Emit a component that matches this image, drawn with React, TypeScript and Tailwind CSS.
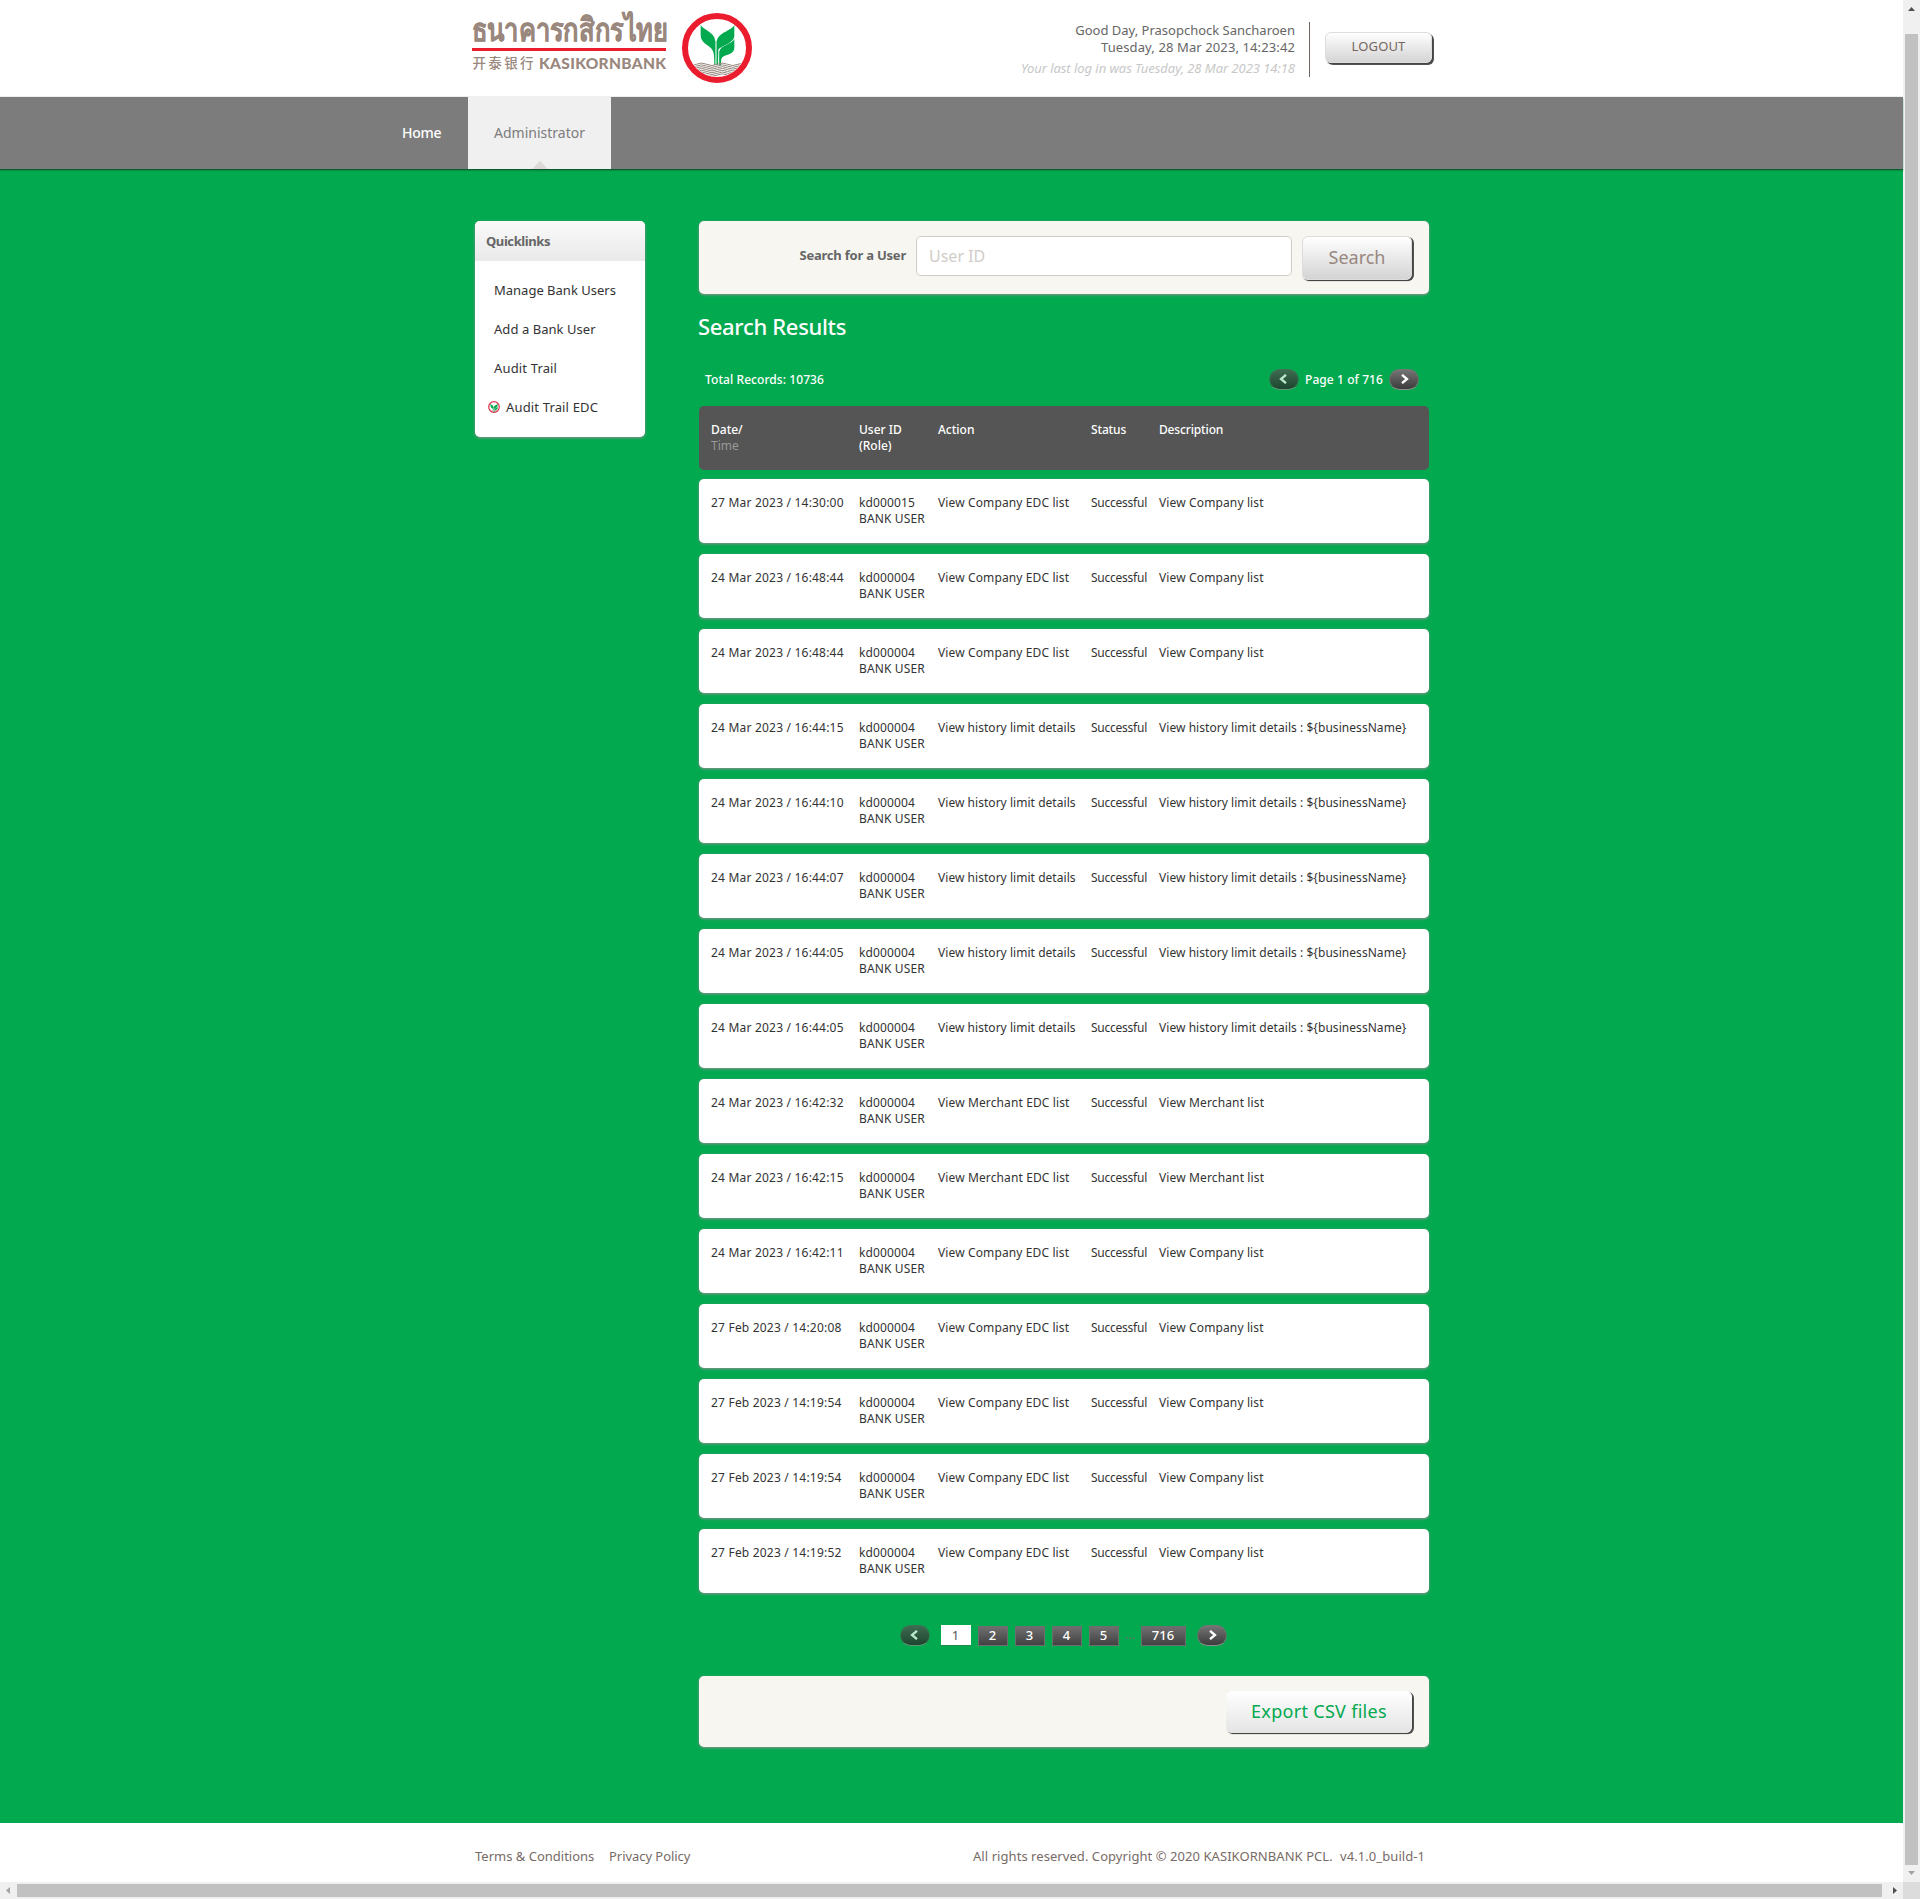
import type { ReactNode } from "react";

type Entry = { time: string; user: string; action: string; description: string };

const company = { action: "View Company EDC list", description: "View Company list" };
const merchant = { action: "View Merchant EDC list", description: "View Merchant list" };
const history = {
  action: "View history limit details",
  description: "View history limit details : ${businessName}",
};

const entries: Entry[] = [
  { time: "27 Mar 2023 / 14:30:00", user: "kd000015", ...company },
  { time: "24 Mar 2023 / 16:48:44", user: "kd000004", ...company },
  { time: "24 Mar 2023 / 16:48:44", user: "kd000004", ...company },
  { time: "24 Mar 2023 / 16:44:15", user: "kd000004", ...history },
  { time: "24 Mar 2023 / 16:44:10", user: "kd000004", ...history },
  { time: "24 Mar 2023 / 16:44:07", user: "kd000004", ...history },
  { time: "24 Mar 2023 / 16:44:05", user: "kd000004", ...history },
  { time: "24 Mar 2023 / 16:44:05", user: "kd000004", ...history },
  { time: "24 Mar 2023 / 16:42:32", user: "kd000004", ...merchant },
  { time: "24 Mar 2023 / 16:42:15", user: "kd000004", ...merchant },
  { time: "24 Mar 2023 / 16:42:11", user: "kd000004", ...company },
  { time: "27 Feb 2023 / 14:20:08", user: "kd000004", ...company },
  { time: "27 Feb 2023 / 14:19:54", user: "kd000004", ...company },
  { time: "27 Feb 2023 / 14:19:54", user: "kd000004", ...company },
  { time: "27 Feb 2023 / 14:19:52", user: "kd000004", ...company },
];

function Leaves() {
  return (
    <g fill="#02a94f">
      <path d="M77 51C84 66 119 72 120.500 98L120.500 171L118 171C118 138 117 127 104 117C90 106 77 100 77 82Z" />
      <path d="M178 51C171 68 128 74 126 99L126 171L129 171L130 126C132 116 178 106 178 84Z" />
      <path d="M178 93C172 108 135 112 132.500 132L132.500 171L138 171C138 154 138 148 148 144C162 139 178 134 178 120Z" />
      <path d="M122 98H124.500V171H122Z" />
    </g>
  );
}

function Logo() {
  return (
    <svg width="290" height="84" viewBox="0 0 290 84" className="block">
      <g fill="#9a877d">
        <text x="-0.500" y="41.300" fontSize="32.500" fontWeight="700" textLength="196" lengthAdjust="spacingAndGlyphs" stroke="#9a877d" strokeWidth="0.300" className="font-['Noto_Sans',sans-serif]">
          ธนาคารกสิกรไทย
        </text>
        <text x="0.500" y="68" fontSize="13.500" fontWeight="500" textLength="61" className="font-['Noto_Sans_CJK_SC',sans-serif]">
          开泰银行
        </text>
        <text x="67" y="68.500" fontSize="15.500" fontWeight="900" textLength="127" className="font-['Lato',sans-serif]">
          KASIKORNBANK
        </text>
      </g>
      <rect x="0" y="48" width="194" height="3" fill="#eb1c2d" />
      <clipPath id="emblem">
        <circle cx="245" cy="48" r="28.500" />
      </clipPath>
      <g transform="translate(203 8) scale(0.333333)">
        <Leaves />
      </g>
      <g clipPath="url(#emblem)" fill="none" stroke="#95857d" strokeWidth="1">
        {[62.8, 64.6, 66.4, 68.2, 70, 71.8, 73.6].map((y) => (
          <path key={y} d={`M214 ${y}q5.200 4 10.400 1.500t10.400 0t10.400 0t10.400 0t10.400 0t10.400 0`} />
        ))}
      </g>
      <circle cx="245" cy="48" r="32" fill="none" stroke="#eb1c2d" strokeWidth="6" />
    </svg>
  );
}

function MiniEmblem() {
  return (
    <svg width="12" height="12" viewBox="0 0 12 12" className="mr-[6px] -mt-px shrink-0">
      <circle cx="6" cy="6" r="5.300" fill="#fff" stroke="#e0324a" strokeWidth="1.200" />
      <g transform="translate(-2.900 -0.800) scale(0.07)">
        <Leaves />
      </g>
      <path d="M3.500 9.300H8.500" stroke="#b9aea9" strokeWidth="0.800" />
    </svg>
  );
}

function Pill({ dir, muted }: { dir: "prev" | "next"; muted?: boolean }) {
  return (
    <span
      className={
        muted
          ? "flex h-[21px] w-[30px] items-center justify-center rounded-full border border-b-[#5c9a76] border-x-[#2f7a4e] border-t-[#3d7355] bg-linear-to-b from-[#3d6b50] to-[#1f4630]"
          : "flex h-[21px] w-[30px] items-center justify-center rounded-full border border-b-[#8d8d8d] border-x-[#66756c] border-t-[#777] bg-linear-to-b from-[#757575] to-[#3c3c3c]"
      }
    >
      <svg
        width="8"
        height="10"
        viewBox="0 0 8 10"
        fill="none"
        stroke={muted ? "#b9e8cb" : "#fff"}
        strokeWidth="2.300"
        className={dir === "prev" ? "-mt-px mr-[2px]" : "-mt-px ml-[2px]"}
      >
        <path d={dir === "prev" ? "M7 0.800L2 5L7 9.200" : "M1 0.800L6 5L1 9.200"} />
      </svg>
    </span>
  );
}

function PageBox({ children, className = "w-[30px]" }: { children: ReactNode; className?: string }) {
  return (
    <span
      className={`${className} mt-px flex h-[20px] justify-center border border-[#6d6d6d] bg-linear-to-b from-[#6f6f6f] to-[#424242] pr-px text-[13px] leading-[17px] font-medium text-white`}
    >
      {children}
    </span>
  );
}

const grid = "grid grid-cols-[148px_79px_153px_68px_1fr] pt-[16px] pl-[12px] h-[64px] rounded-[5px] text-[12px] leading-[16px]";
const card = "rounded-[5px] shadow-[0_1px_3px_#8f8f8f]";

export default function App() {
  return (
    <div className="flex h-[1899px] w-[1920px] flex-col overflow-hidden bg-white font-['Noto_Sans',sans-serif]">
      <div className="flex h-[1882px]">
        <div className="flex w-[1903px] flex-col">
          <header className="flex h-[97px] border-b border-[#eee] pl-[472px]">
            <Logo />
            <div className="mt-[22px] flex h-[55px] w-[548px] flex-col items-end border-r border-[#6f6460] pr-[14px] text-[13px] leading-[17px] text-[#666]">
              <p>Good Day, Prasopchock Sancharoen</p>
              <p className="tracking-[0.11px]">Tuesday, 28 Mar 2023, 14:23:42</p>
              <p className="mt-[4px] tracking-[-0.05px] text-[#c8c8c8] italic">Your last log in was Tuesday, 28 Mar 2023 14:18</p>
            </div>
            <button className="mt-[32px] ml-[15px] h-[31px] w-[107px] rounded-[6px] border border-[#ddd] bg-linear-to-b from-white to-[#d4d4d4] pb-[2px] text-[13px] leading-[17px] tracking-[0.15px] text-[#756661] shadow-[1px_1px_1px_#444,2px_2px_0_#555]">
              LOGOUT
            </button>
          </header>

          <nav className="relative z-10 flex h-[72px] bg-[#7c7c7c] pl-[377px] text-[14px] leading-[72px] shadow-[0_1px_0_#0d5c31,0_2px_1px_#06903f]">
            <a className="w-[91px] pl-[25px] font-medium tracking-[-0.3px] text-white">Home</a>
            <a className="relative w-[143px] bg-[#f0f0f0] text-center text-[#7c7c7c]">
              Administrator
              <svg width="16" height="8" viewBox="0 0 16 8" className="absolute bottom-0 left-[64px]">
                <path d="M0 8L8 0L16 8Z" fill="#ded9d9" />
              </svg>
            </a>
          </nav>

          <main className="flex h-[1654px] items-start bg-[#02a94f] pt-[52px] pl-[475px]">
            <aside className={`${card} w-[170px] shrink-0 overflow-hidden bg-white text-[13px]`}>
              <h2 className="h-[40px] bg-linear-to-b from-[#fafafa] to-[#e9e9e9] pl-[11px] leading-[40px] font-bold tracking-[-0.42px] text-[#666]">
                Quicklinks
              </h2>
              <ul className="py-[10px] pl-[19px] leading-[39px] text-[#333]">
                <li>Manage Bank Users</li>
                <li className="tracking-[0.05px]">Add a Bank User</li>
                <li className="tracking-[0.15px]">Audit Trail</li>
                <li className="-ml-[6px] flex items-center tracking-[0.15px]">
                  <MiniEmblem />
                  Audit Trail EDC
                </li>
              </ul>
            </aside>

            <section className="ml-[54px] w-[730px]">
              <div className={`${card} flex h-[73px] items-start justify-end bg-[#f7f6f1] pt-[15px] pr-[17px]`}>
                <label className="mr-[10px] text-[13px] leading-[38px] font-bold tracking-[-0.22px] text-[#666]">Search for a User</label>
                <div className="h-[40px] w-[376px] rounded-[5px] border border-[#ccc] bg-white pl-[12px] text-[16px] leading-[39px] text-[#d0cdc8]">
                  User ID
                </div>
                <button className="ml-[10px] h-[44px] w-[110px] rounded-[6px] border border-[#ddd] bg-linear-to-b from-white to-[#d4d4d4] pb-[3px] text-[18px] leading-[24px] text-[#98877f] shadow-[1px_1px_1px_#444,2px_1px_0_#555]">
                  Search
                </button>
              </div>

              <h1 className="mt-[18px] -ml-px text-[22px] leading-[28px] font-medium tracking-[-0.32px] text-white">Search Results</h1>

              <div className="mt-[29px] flex h-[21px] items-center pr-[10px] pl-[6px] text-[12px] font-medium text-white">
                <span className="tracking-[0.07px]">Total Records: 10736</span>
                <span className="ml-auto flex items-center">
                  <Pill dir="prev" muted />
                  <span className="w-[90px] text-center tracking-[0.08px]">Page 1 of 716</span>
                  <Pill dir="next" />
                </span>
              </div>

              <div className={`${grid} mt-[16px] bg-[#555] font-medium text-white`}>
                <div>
                  Date/
                  <br />
                  <span className="font-normal text-[#999]">Time</span>
                </div>
                <div>
                  User ID
                  <br />
                  (Role)
                </div>
                <div>Action</div>
                <div className="tracking-[-0.15px]">Status</div>
                <div className="tracking-[-0.15px]">Description</div>
              </div>

              <div className="mt-[9px] flex flex-col gap-[11px]">
                {entries.map((e, i) => (
                  <div key={i} className={`${grid} bg-white text-[#333] shadow-[0_1px_3px_#8f8f8f]`}>
                    <div className="tracking-[0.2px]">{e.time}</div>
                    <div className="tracking-[0.13px]">
                      {e.user}
                      <br />
                      BANK USER
                    </div>
                    <div className={e.action.includes("EDC") ? "tracking-[0.12px]" : "tracking-[0.04px]"}>{e.action}</div>
                    <div className="tracking-[-0.24px]">Successful</div>
                    <div className={e.action.includes("EDC") ? "tracking-[0.13px]" : "tracking-[0.05px]"}>{e.description}</div>
                  </div>
                ))}
              </div>

              <div className="mt-[32px] flex h-[21px] items-start pl-[201px]">
                <Pill dir="prev" muted />
                <span className="mr-[7px] ml-[11px] flex h-[20px] w-[30px] justify-center bg-white pr-px text-[13px] leading-[20px] text-[#555] shadow-[0_1px_0_#1b8a4b]">1</span>
                <div className="flex gap-[7px]">
                  <PageBox>2</PageBox>
                  <PageBox>3</PageBox>
                  <PageBox>4</PageBox>
                  <PageBox>5</PageBox>
                </div>
                <span className="w-[22px] text-center text-[12px] leading-[20px] text-[#6d6d6d]">...</span>
                <PageBox className="mr-[11px] w-[45px]">716</PageBox>
                <Pill dir="next" />
              </div>

              <div className={`${card} mt-[30px] flex h-[71px] justify-end bg-[#f7f6f1] pt-[15px] pr-[17px]`}>
                <button className="h-[42px] w-[186px] rounded-[6px] bg-linear-to-b from-white to-[#e4e4e4] pb-[3px] text-[18px] leading-[24px] tracking-[0.3px] text-[#02a94f] shadow-[1px_1px_1px_#444,2px_1px_0_#555]">
                  Export CSV files
                </button>
              </div>
            </section>
          </main>

          <footer className="flex grow pt-[23px] pl-[475px] text-[13px] leading-[20px] text-[#776b66]">
            <span className="w-[134px]">Terms &amp; Conditions</span>
            <span className="w-[364px] tracking-[-0.05px]">Privacy Policy</span>
            <span className="w-[367px] tracking-[0.06px]">All rights reserved. Copyright © 2020 KASIKORNBANK PCL.</span>
            <span className="tracking-[0.08px]">v4.1.0_build-1</span>
          </footer>
        </div>

        <div className="flex w-[17px] flex-col items-center bg-[#f0f0f0]">
          <svg width="7" height="4" viewBox="0 0 7 4" className="mt-[7px]">
            <path d="M0 4L3.500 0L7 4Z" fill="#505050" />
          </svg>
          <div className="mt-[23px] h-[1831px] w-[13px] bg-[#c1c1c1]" />
          <svg width="7" height="4" viewBox="0 0 7 4" className="mt-[6px]">
            <path d="M0 0L3.500 4L7 0Z" fill="#a3a3a3" />
          </svg>
        </div>
      </div>

      <div className="flex h-[17px] items-center bg-[#f0f0f0]">
        <svg width="4" height="7" viewBox="0 0 4 7" className="ml-[6px]">
          <path d="M4 0L0 3.500L4 7Z" fill="#a3a3a3" />
        </svg>
        <div className="ml-[7px] h-[13px] w-[1865px] bg-[#c1c1c1]" />
        <svg width="4" height="7" viewBox="0 0 4 7" className="ml-[11px]">
          <path d="M0 0L4 3.500L0 7Z" fill="#505050" />
        </svg>
        <div className="ml-auto h-[17px] w-[17px] bg-[#dcdcdc]" />
      </div>
    </div>
  );
}
